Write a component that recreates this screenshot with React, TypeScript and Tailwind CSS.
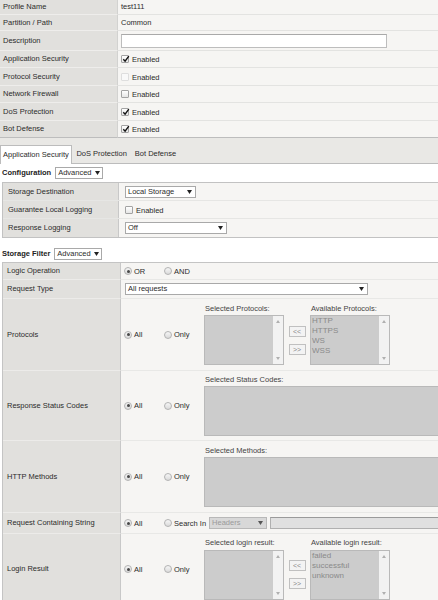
import React from "react";

const Tri = ({ c = "#222" }: { c?: string }) => (
  <svg width="5" height="4" viewBox="0 0 5 4" className="shrink-0">
    <polygon points="0,0 5,0 2.5,4" fill={c} />
  </svg>
);

const Check = ({ checked, disabled }: { checked?: boolean; disabled?: boolean }) => (
  <span
    className={`relative w-[8px] h-[8px] shrink-0 border rounded-[1px] flex items-center justify-center ${
      disabled
        ? "border-[#dedede] bg-[#f9f9f9]"
        : "border-[#a3a3a3] bg-gradient-to-b from-white to-[#e6e6e6]"
    }`}
  >
    {checked && (
      <svg width="8" height="8" viewBox="0 0 8 8" className="absolute left-[0px] top-[-1px]">
        <path d="M1.3 4.3 L3.1 6.2 L6.8 1.2" stroke="#111" strokeWidth="1.4" fill="none" />
      </svg>
    )}
  </span>
);

const Radio = ({ on }: { on?: boolean }) => (
  <span className="w-[8px] h-[8px] shrink-0 rounded-full border border-[#b3b3b3] bg-gradient-to-b from-[#f6f6f6] to-[#dadada] flex items-center justify-center">
    {on && <span className="w-[3px] h-[3px] rounded-full bg-[#474747]" />}
  </span>
);

const Select = ({ w, text, disabled }: { w: string; text: string; disabled?: boolean }) => (
  <div
    className={`${w} h-[12px] shrink-0 border flex items-center justify-between gap-[3px] pl-[2px] pr-[3px] ${
      disabled ? "bg-[#d8d8d8] border-[#b8b8b8] text-[#9a9a9a]" : "bg-white border-[#a9a9a9]"
    }`}
  >
    <span className="whitespace-nowrap">{text}</span>
    <Tri c={disabled ? "#555" : "#222"} />
  </div>
);

const ListBox = ({ items = [] as string[] }: { items?: string[] }) => (
  <div className="w-[80px] h-[50px] border border-[#b9b9b9] bg-[#cccccc] flex">
    <div className="flex-1 pl-[1px] text-[8px] leading-[10px] text-[#8a8a8a]">
      {items.map((i) => (
        <div key={i}>{i}</div>
      ))}
    </div>
    <div className="w-[10px] bg-[#f2f2f2] flex flex-col items-center justify-between py-[4px]">
      <svg width="4" height="3" viewBox="0 0 4 3">
        <polygon points="0,3 4,3 2,0" fill="#b0b0b0" />
      </svg>
      <svg width="4" height="3" viewBox="0 0 4 3">
        <polygon points="0,0 4,0 2,3" fill="#b0b0b0" />
      </svg>
    </div>
  </div>
);

const MoveBtn = ({ t }: { t: string }) => (
  <div className="w-[17px] h-[11px] border border-[#c0c0c0] bg-[#f3f3f3] text-[7px] text-[#8a8a8a] flex items-center justify-center">
    {t}
  </div>
);

const TopRow = ({
  label,
  h,
  last,
  children,
}: {
  label: string;
  h: string;
  last?: boolean;
  children?: React.ReactNode;
}) => (
  <div className={`flex ${h}`}>
    <div
      className={`w-[118px] shrink-0 bg-[#e1e0dd] border-r border-r-[#d2d2d0] border-b flex items-center pl-[3px] ${
        last ? "border-b-[#bdbdbd]" : "border-b-[#eeedeb]"
      }`}
    >
      {label}
    </div>
    <div
      className={`flex-1 bg-[#f6f5f3] border-b flex items-center pl-[3px] gap-[3px] ${
        last ? "border-b-[#bdbdbd]" : "border-b-[#e3e3e1]"
      }`}
    >
      {children}
    </div>
  </div>
);

const CRow = ({ label, h, children, last }: { label: string; h: string; children?: React.ReactNode; last?: boolean }) => (
  <div className={`flex ${h} border-b ${last ? "border-b-[#c2c2c2]" : "border-b-[#e6e6e4]"}`}>
    <div className="w-[116px] shrink-0 bg-[#e1e0dd] border-r border-[#c8c8c8] flex items-center pl-[5px]">{label}</div>
    <div className="flex-1 bg-[#f6f5f3] flex items-center pl-[6px] gap-[3px]">{children}</div>
  </div>
);

const FRow = ({ label, h, children }: { label: string; h: string; children?: React.ReactNode }) => (
  <div className={`flex ${h}`}>
    <div className="w-[118px] shrink-0 bg-[#e1e0dd] border-r border-r-[#c8c8c8] border-b border-b-[#ecebe9] flex items-center pl-[4px]">
      {label}
    </div>
    <div className="flex-1 bg-[#f6f5f3] border-b border-b-[#e8e8e6] flex items-center pl-[3px]">{children}</div>
  </div>
);

const RG = ({ on, text }: { on?: boolean; text: string }) => (
  <div className="w-[40px] shrink-0 flex items-center gap-[2px]">
    <Radio on={on} />
    <span className="mt-[1px]">{text}</span>
  </div>
);

const Picker = ({
  sel,
  avail,
  items,
}: {
  sel: string;
  avail: string;
  items: string[];
}) => (
  <div className="flex flex-col gap-[2px]">
    <div className="flex h-[9px] items-center text-[#444]">
      <div className="w-[106px] pl-[1px]">{sel}</div>
      <div className="pl-[1px]">{avail}</div>
    </div>
    <div className="flex items-center">
      <ListBox />
      <div className="w-[26px] flex flex-col items-center gap-[7px]">
        <MoveBtn t="<<" />
        <MoveBtn t=">>" />
      </div>
      <ListBox items={items} />
    </div>
  </div>
);

const BigPicker = ({ sel }: { sel: string }) => (
  <div className="flex flex-col gap-[2px]">
    <div className="h-[9px] flex items-center pl-[1px] text-[#444]">{sel}</div>
    <div className="w-[300px] h-[50px] border border-[#b9b9b9] bg-[#cccccc]" />
  </div>
);

export default function App() {
  return (
    <div className="w-[438px] h-[600px] overflow-hidden bg-white text-[7.5px] leading-none text-[#2b2b2b] font-['Liberation_Sans',Arial,sans-serif]">
      <div className="w-[640px]">
        {/* Top table */}
        <TopRow label="Profile Name" h="h-[15px]">
          test111
        </TopRow>
        <TopRow label="Partition / Path" h="h-[16px]">
          Common
        </TopRow>
        <TopRow label="Description" h="h-[20px]">
          <div className="w-[266px] h-[14px] border border-[#bdbdbd] border-t-[#a9a9a9] bg-white" />
        </TopRow>
        <TopRow label="Application Security" h="h-[17px]">
          <Check checked />
          <span className="mt-[2px]">Enabled</span>
        </TopRow>
        <TopRow label="Protocol Security" h="h-[18px]">
          <Check disabled />
          <span className="mt-[2px]">Enabled</span>
        </TopRow>
        <TopRow label="Network Firewall" h="h-[17px]">
          <Check />
          <span className="mt-[2px]">Enabled</span>
        </TopRow>
        <TopRow label="DoS Protection" h="h-[18px]">
          <Check checked />
          <span className="mt-[2px]">Enabled</span>
        </TopRow>
        <TopRow label="Bot Defense" h="h-[17px]" last>
          <Check checked />
          <span className="mt-[2px]">Enabled</span>
        </TopRow>

        {/* Tabs */}
        <div className="h-[26px] bg-[#e9e8e5] border-b border-[#bcbcbc] flex items-end gap-[1px]">
          <div className="h-[19px] -mb-[1px] bg-white border border-b-0 border-[#bcbcbc] px-[2px] flex items-center">
            Application Security
          </div>
          <div className="h-[18px] px-[3.5px] flex items-center">DoS Protection</div>
          <div className="h-[18px] px-[3.5px] flex items-center">Bot Defense</div>
        </div>

        {/* Configuration */}
        <div className="h-[18px] flex items-center px-[2px] gap-[4px]">
          <span className="font-bold text-[#222]">Configuration</span>
          <Select w="w-[48px]" text="Advanced" />
        </div>
        <div className="ml-[2px] border-l border-t border-[#c2c2c2]">
          <CRow label="Storage Destination" h="h-[18px]">
            <Select w="w-[71px]" text="Local Storage" />
          </CRow>
          <CRow label="Guarantee Local Logging" h="h-[18px]">
            <Check />
            <span className="mt-[2px]">Enabled</span>
          </CRow>
          <CRow label="Response Logging" h="h-[19px]" last>
            <Select w="w-[102px]" text="Off" />
          </CRow>
        </div>

        {/* Storage Filter */}
        <div className="h-[24px] pt-[7px] flex items-center px-[2px] gap-[4px]">
          <span className="font-bold text-[#222]">Storage Filter</span>
          <Select w="w-[48px]" text="Advanced" />
        </div>
        <div className="ml-[2px] border-l border-t border-[#c4c4c4]">
          <FRow label="Logic Operation" h="h-[17px]">
            <RG on text="OR" />
            <RG text="AND" />
          </FRow>
          <FRow label="Request Type" h="h-[19px]">
            <div className="ml-[1px]">
              <Select w="w-[243px]" text="All requests" />
            </div>
          </FRow>
          <FRow label="Protocols" h="h-[72px]">
            <RG on text="All" />
            <RG text="Only" />
            <Picker
              sel="Selected Protocols:"
              avail="Available Protocols:"
              items={["HTTP", "HTTPS", "WS", "WSS"]}
            />
          </FRow>
          <FRow label="Response Status Codes" h="h-[70px]">
            <RG on text="All" />
            <RG text="Only" />
            <BigPicker sel="Selected Status Codes:" />
          </FRow>
          <FRow label="HTTP Methods" h="h-[72px]">
            <RG on text="All" />
            <RG text="Only" />
            <BigPicker sel="Selected Methods:" />
          </FRow>
          <FRow label="Request Containing String" h="h-[21px]">
            <RG on text="All" />
            <div className="flex items-center gap-[2px]">
              <Radio />
              <span className="mt-[1px]">Search In</span>
            </div>
            <div className="ml-[3px]">
              <Select w="w-[58px]" text="Headers" disabled />
            </div>
            <div className="ml-[3px] w-[300px] h-[12px] border border-[#b0b0b0] border-t-[#9a9a9a] bg-[#e0e0e0]" />
          </FRow>
          <FRow label="Login Result" h="h-[71px]">
            <RG on text="All" />
            <RG text="Only" />
            <Picker
              sel="Selected login result:"
              avail="Available login result:"
              items={["failed", "successful", "unknown"]}
            />
          </FRow>
        </div>
      </div>
    </div>
  );
}
